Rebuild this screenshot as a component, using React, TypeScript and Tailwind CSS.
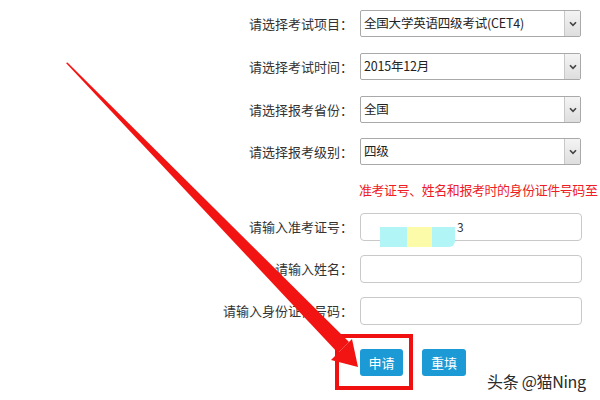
import React from "react";

const font = { fontFamily: '"Microsoft YaHei", "Noto Sans CJK SC", "Noto Sans", sans-serif' };

function SelectBox({ text }: { text: string }) {
  return (
    <div className="flex h-[27px] w-[221px] items-stretch rounded-[2px] border border-[#a9a9a9] bg-white">
      <div className="flex flex-1 items-center pl-[3px] text-[12.5px] tracking-[-0.2px] text-[#222]">{text}</div>
      <div className="flex w-[16px] items-center justify-center border-l border-[#c8c8c8] bg-gradient-to-b from-[#f4f4f4] to-[#dedede]">
        <svg width="8" height="6" viewBox="0 0 8 6">
          <path d="M1 1.2 L4 4.4 L7 1.2" fill="none" stroke="#444" strokeWidth="1.6" />
        </svg>
      </div>
    </div>
  );
}

function Row({ label, children, cls }: { label: string; children: React.ReactNode; cls: string }) {
  return (
    <div className={"flex items-center " + cls}>
      <div className="w-[353px] text-right text-[13px] text-[#333]">{label}</div>
      <div className="ml-[7px]">{children}</div>
    </div>
  );
}

function InputBox({ children }: { children?: React.ReactNode }) {
  return (
    <div className="relative h-[28px] w-[222px] rounded-[4px] border border-[#c9c9c9] bg-white">{children}</div>
  );
}

export default function App() {
  return (
    <div className="relative h-[400px] w-[600px] overflow-hidden bg-white" style={font}>
      <div className="flex flex-col pt-[10px]">
        <Row label="请选择考试项目：" cls="h-[27px] mb-[16px]">
          <SelectBox text="全国大学英语四级考试(CET4)" />
        </Row>
        <Row label="请选择考试时间：" cls="h-[27px] mb-[16px]">
          <SelectBox text="2015年12月" />
        </Row>
        <Row label="请选择报考省份：" cls="h-[27px] mb-[15px]">
          <SelectBox text="全国" />
        </Row>
        <Row label="请选择报考级别：" cls="h-[27px] mb-[16px]">
          <SelectBox text="四级" />
        </Row>
        <div className="mb-[14px] flex h-[18px] items-center whitespace-nowrap pl-[359px] text-[13px] tracking-[-0.45px] text-[#ee1c25]">
          准考证号、姓名和报考时的身份证件号码至
        </div>
        <Row label="请输入准考证号：" cls="h-[28px] mb-[14px]">
          <InputBox>
            <div className="absolute left-[19px] top-[13px] flex h-[20px]">
              <div className="w-[27px] bg-[#b2f5f7]" />
              <div className="w-[25px] bg-[#fbfbaa]" />
              <div className="w-[23px] rounded-br-[6px] bg-[#b2f5f7]" />
            </div>
            <div className="absolute left-[96px] top-[6px] text-[12px] leading-[14px] text-[#333]">3</div>
          </InputBox>
        </Row>
        <Row label="请输入姓名：" cls="h-[28px] mb-[14px]">
          <InputBox />
        </Row>
        <Row label="请输入身份证件号码：" cls="h-[28px] mb-[24px]">
          <InputBox />
        </Row>
        <div className="flex h-[27px] pl-[360px]">
          <button className="h-[27px] w-[43px] rounded-[3px] bg-[#1b9ad6] text-[13px] text-white">申请</button>
          <button className="ml-[19px] h-[27px] w-[44px] rounded-[3px] bg-[#1b9ad6] text-[13px] text-white">重填</button>
        </div>
      </div>

      {/* annotation red box */}
      <div className="absolute left-[335px] top-[334px] h-[56px] w-[78px] border-[4px] border-[#f01010]" />

      {/* arrow */}
      <svg className="absolute left-0 top-0" width="600" height="400" viewBox="0 0 600 400">
        <polygon points="66,63 67.5,62.5 349,342 338,353" fill="#f21313" />
        <polygon points="358,367 352,339 331,360" fill="#f21313" />
      </svg>

      <div
        className="absolute left-[487px] top-[369px] text-[16px] tracking-[-0.3px] text-[#2a2a2a]"
        style={{ textShadow: "0 0 2px #fff, 0 0 2px #fff" }}
      >
        头条 @猫Ning
      </div>
    </div>
  );
}
